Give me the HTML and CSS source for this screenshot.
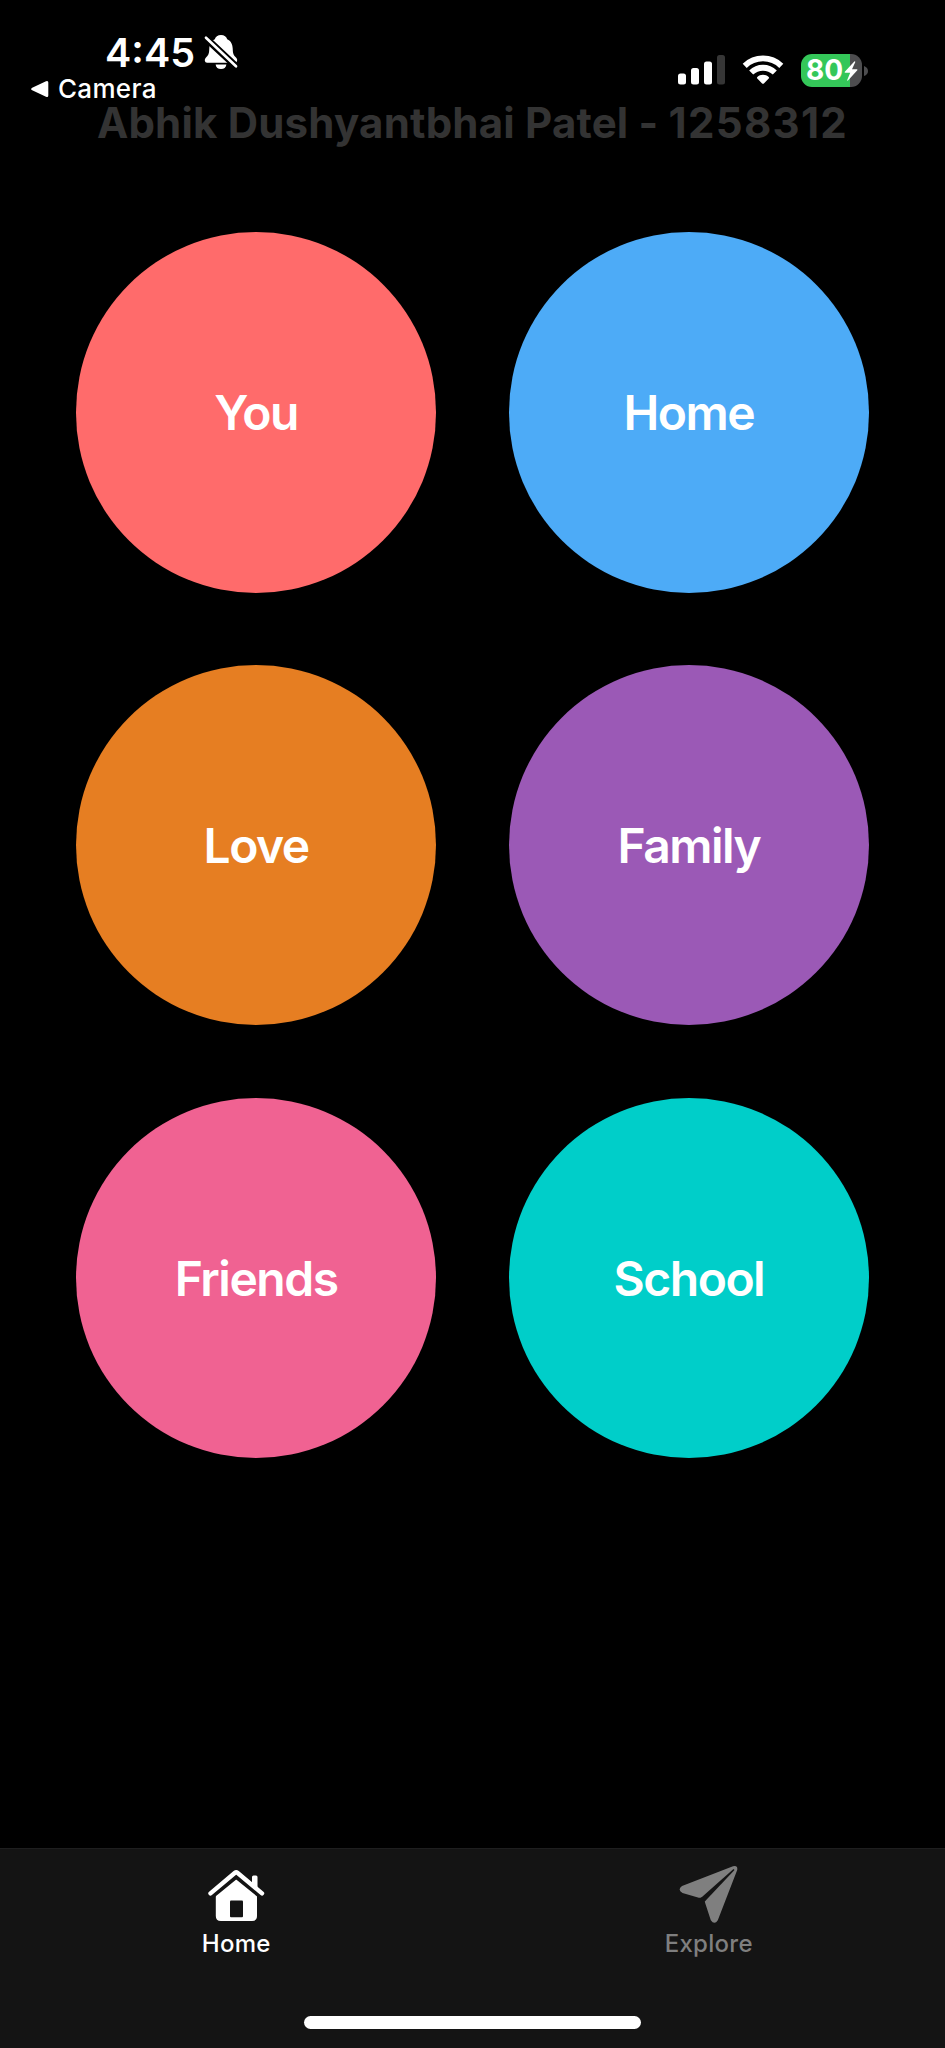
FILE: index.html
```html
<!DOCTYPE html>
<html lang="en">
<head>
<meta charset="utf-8">
<title>Home</title>
<link rel="stylesheet" href="styles.css">
</head>
<body>
<div class="screen">
  <header class="status">
    <div class="status-left">
      <div class="clock">
        <span class="time">4:45</span>
        <svg class="bell" viewBox="0 0 34 36">
          <path fill="#fff" d="M17 1c-3.300 0-5.500 1.700-6.200 4.300C7 7 5.500 10.500 5.300 14.500 5.100 20 4.500 21 1.800 23.800c-1.600 1.700-1.200 5 1.300 5h27.800c2.500 0 2.900-3.300 1.300-5-2.700-2.800-3.300-3.800-3.500-9.300-.200-4-1.700-7.500-5.500-9.200C22.500 2.700 20.300 1 17 1zM11.600 30.500h10.800C22 33.500 20 35 17 35s-5-1.500-5.400-4.500z"/>
          <path stroke="#000" stroke-width="7" stroke-linecap="round" d="M2 4.300l30 28"/>
          <path stroke="#fff" stroke-width="2.700" stroke-linecap="round" d="M2 3.800l30 28.400"/>
        </svg>
      </div>
      <div class="back">
        <svg class="back-arrow" viewBox="0 0 18 18"><path fill="#fff" d="M1.200 7.700L15 1.200Q17.300.300 17.300 2.500v13q0 2.200-2.300 1.300L1.200 10.300q-2.200-1.300 0-2.600z"/></svg>
        <span class="back-label">Camera</span>
      </div>
    </div>
    <div class="status-right">
      <svg class="signal" viewBox="0 0 48 32" fill="#fff">
        <rect x="1" y="19.500" width="8" height="11" rx="2.500"/>
        <rect x="14" y="14" width="8" height="16.500" rx="2.500"/>
        <rect x="27" y="7.500" width="8" height="23" rx="2.500"/>
        <rect x="40" y="1" width="8" height="29.500" rx="2.500" fill="#363636"/>
      </svg>
      <svg class="wifi" viewBox="0 0 42 32">
        <path fill="none" stroke="#fff" stroke-width="5.800" d="M2.700 11.800a26.500 26.500 0 0 1 36.600 0M9.200 18.500a17 17 0 0 1 23.600 0"/>
        <path fill="#fff" d="M21 20.700c2.200 0 4.200.8 5.700 2.300.5.500.5 1 0 1.500l-4.800 4.900q-.9.900-1.800 0l-4.800-4.900c-.5-.5-.5-1 0-1.500 1.500-1.500 3.500-2.300 5.700-2.300z"/>
      </svg>
      <div class="battery">
        <div class="battery-body">
          <span class="battery-text">80</span>
          <svg class="bolt" viewBox="0 0 14 20"><path fill="#fff" d="M10.300.5L.8 10.700q-.6.900.5 1h4.900l-3 7.300q-.2 1.200.8.500l9.300-10.300q.5-.8-.5-1H8l3.200-7q.2-1.300-.9-.7z"/></svg>
        </div>
        <svg class="battery-cap" viewBox="0 0 4 10"><path fill="#4d4d4f" d="M0 0q4 1.500 4 5t-4 5z"/></svg>
      </div>
    </div>
  </header>

  <h1 class="title">Abhik Dushyantbhai Patel - <span class="title-id">1258312</span></h1>

  <main class="topics">
    <div class="topic you"><span class="topic-label">You</span></div>
    <div class="topic house"><span class="topic-label">Home</span></div>
    <div class="topic love"><span class="topic-label">Love</span></div>
    <div class="topic family"><span class="topic-label">Family</span></div>
    <div class="topic friends"><span class="topic-label">Friends</span></div>
    <div class="topic school"><span class="topic-label">School</span></div>
  </main>

  <footer class="dock">
    <nav class="tabs">
      <div class="tab active">
        <svg class="tab-icon" viewBox="0 0 60 60" fill="currentColor">
          <path d="M46 25V13q0-1.500 1.500-1.500H50q1.500 0 1.500 1.500v15z"/>
          <path d="M9.800 30L30.200 12 51 30v22q0 5-5 5H14.800q-5 0-5-5z"/>
          <path fill="none" stroke="#141414" stroke-width="5" d="M4.500 33.200L30.200 12.300 56 33.200"/>
          <path fill="none" stroke="currentColor" stroke-width="4.400" stroke-linecap="round" stroke-linejoin="round" d="M4.500 29.400L29 8.800q1.200-1 2.400 0L56 29.400"/>
          <rect x="24" y="36.500" width="13" height="16.700" rx="1" fill="#141414"/>
        </svg>
        <span class="tab-label">Home</span>
      </div>
      <div class="tab">
        <svg class="tab-icon" viewBox="0 0 60 60" fill="currentColor">
          <path d="M3 22L54 2.300q5-1.300 4.200 3.700L38.800 56.300q-3.300 5-7 0L26 38.500q-.5-1.700.8-3L22.300 33.300q-1 .8-2.500.4L3.500 29q-5.500-3.200-.5-7z"/>
          <path fill="#141414" d="M21.500 34.300L54.500 5l1 1L26 37.300z"/>
        </svg>
        <span class="tab-label">Explore</span>
      </div>
    </nav>
    <div class="home-indicator"></div>
  </footer>
</div>
</body>
</html>
```

FILE: styles.css
```css
* { box-sizing: border-box; }

body {
  margin: 0;
  background: #000;
  color: #fff;
  font-family: Inter, "Liberation Sans", sans-serif;
}

svg { display: block; flex: none; }

.screen {
  width: 945px;
  height: 2048px;
  display: flex;
  flex-direction: column;
  overflow: hidden;
}

.status {
  height: 105px;
  flex: none;
  display: flex;
  justify-content: space-between;
  padding: 34px 77px 0 31px;
}

.clock {
  display: flex;
  align-items: flex-start;
  gap: 9px;
  padding-left: 74px;
  height: 42px;
}

.time {
  font-size: 39.500px;
  line-height: 38px;
  font-weight: 600;
}

.bell { width: 34px; height: 36px; }

.back {
  display: flex;
  align-items: center;
  gap: 9px;
  height: 26px;
}

.back-arrow { width: 18px; height: 18px; }

.back-label {
  font-size: 26px;
  line-height: 26px;
  font-weight: 450;
  letter-spacing: 0.300px;
}

.status-right {
  display: flex;
  align-items: flex-start;
  padding-top: 20px;
}

.signal { width: 48px; height: 32px; }
.wifi { width: 42px; height: 32px; margin: 0 17px; }

.battery {
  display: flex;
  align-items: center;
  gap: 2px;
}

.battery-body {
  width: 61px;
  height: 33px;
  display: flex;
  align-items: center;
  padding-left: 5px;
  border-radius: 11px;
  background: linear-gradient(90deg, #34c759 49px, #4d4d4f 49px);
}

.battery-text {
  font-size: 28px;
  line-height: 33px;
  font-weight: 700;
}

.bolt { width: 14px; height: 20px; margin-left: 1px; }
.battery-cap { width: 4px; height: 10px; }

.title {
  margin: 0;
  height: 36px;
  flex: none;
  font-size: 42px;
  line-height: 36px;
  font-weight: 700;
  letter-spacing: 0.200px;
  text-align: center;
  white-space: nowrap;
  color: #333;
}

.title-id { letter-spacing: 1.300px; }

.topics {
  flex: 1;
  display: grid;
  grid-template-columns: repeat(2, 360.700px);
  grid-auto-rows: 360.700px;
  gap: 72.100px;
  justify-content: center;
  align-content: start;
  padding-top: 91px;
}

.topic {
  display: flex;
  align-items: center;
  justify-content: center;
  padding-top: 2px;
  border-radius: 50%;
}

.topic-label {
  font-size: 48px;
  line-height: 58px;
  font-weight: 600;
  letter-spacing: -1.500px;
}

.you { background: #ff6b6b; }
.house { background: #4dabf7; }
.love { background: #e67e22; }
.family { background: #9b59b6; }
.friends { background: #f06292; }
.school { background: #00cec9; }

.dock {
  height: 200px;
  flex: none;
  display: flex;
  flex-direction: column;
  align-items: center;
  justify-content: space-between;
  padding-bottom: 19px;
  border-top: 1px solid #1e1e1f;
  background: #141414;
}

.tabs {
  width: 100%;
  display: flex;
}

.tab {
  flex: 1;
  display: flex;
  flex-direction: column;
  align-items: center;
  padding-top: 15px;
  color: #7f7f7f;
}

.tab.active { color: #fff; }

.tab-icon { width: 60px; height: 60px; }

.tab-label {
  margin-top: 6px;
  font-size: 24px;
  line-height: 28px;
  font-weight: 450;
  letter-spacing: 0.300px;
}

.home-indicator {
  width: 337px;
  height: 13px;
  border-radius: 7px;
  background: #fff;
}
```
